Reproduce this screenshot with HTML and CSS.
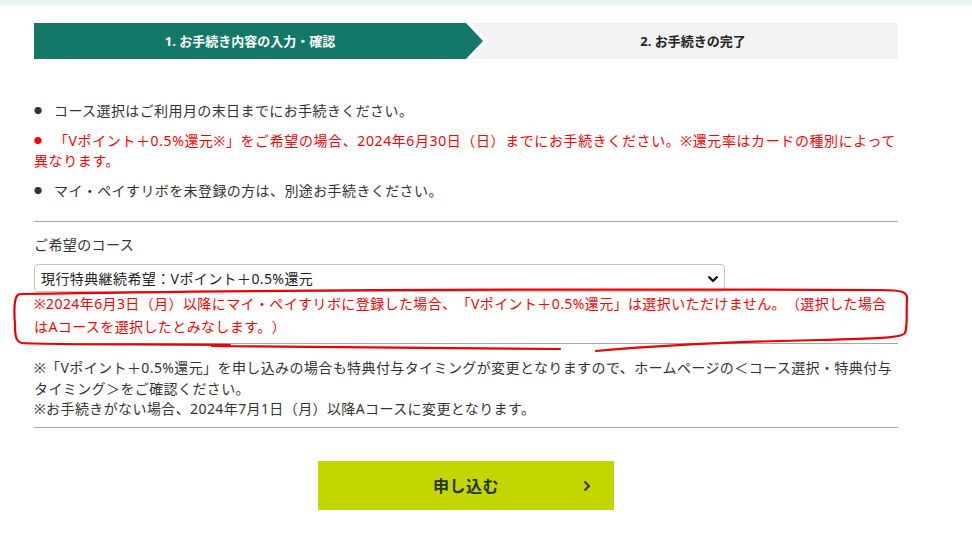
FILE: index.html
```html
<!DOCTYPE html>
<html lang="ja">
<head>
<meta charset="utf-8">
<title>お手続き</title>
<link rel="stylesheet" href="styles.css">
</head>
<body>
<div class="topstrip"></div>
<main class="page">
  <div class="steps">
    <div class="step-current"><div class="step-fill">1. お手続き内容の入力・確認</div></div>
    <div class="step-next">2. お手続きの完了</div>
  </div>

  <ul class="notes">
    <li><span class="dot">●</span>コース選択はご利用月の末日までにお手続きください。</li>
    <li class="red"><span class="dot">●</span>「Vポイント＋0.5%還元※」をご希望の場合、2024年6月30日（日）までにお手続きください。※還元率はカードの種別によって異なります。</li>
    <li><span class="dot">●</span>マイ・ペイすリボを未登録の方は、別途お手続きください。</li>
  </ul>

  <hr class="rule">

  <div class="field">
    <div class="label">ご希望のコース</div>
    <div class="select-wrap">
      <select class="select">
        <option>現行特典継続希望：Vポイント＋0.5%還元</option>
      </select>
      <svg class="chev" width="12" height="8" viewBox="0 0 12 8"><path d="M1.5 1.5 L6 6 L10.5 1.5" fill="none" stroke="#111" stroke-width="2.2"/></svg>
    </div>
    <p class="warn">※2024年6月3日（月）以降にマイ・ペイすリボに登録した場合、「Vポイント＋0.5%還元」は選択いただけません。（選択した場合はAコースを選択したとみなします。）</p>
  </div>

  <hr class="rule">

  <div class="foot">
    <p>※「Vポイント＋0.5%還元」を申し込みの場合も特典付与タイミングが変更となりますので、ホームページの＜コース選択・特典付与タイミング＞をご確認ください。</p>
    <p>※お手続きがない場合、2024年7月1日（月）以降Aコースに変更となります。</p>
  </div>

  <hr class="rule">

  <div class="actions">
    <button class="submit" type="button"><span>申し込む</span><svg class="btn-chev" width="8" height="12" viewBox="0 0 8 12"><path d="M1.5 1.5 L6 6 L1.5 10.5" fill="none" stroke="#2a3a33" stroke-width="2"/></svg></button>
  </div>
</main>

<svg class="annot" width="972" height="547" viewBox="0 0 972 547">
  <path d="M22 294 C 250 290, 600 289, 880 290 C 903 290, 908 292, 907 300 C 906 312, 908 325, 905 333 C 902 338, 880 338, 820 340 C 720 342, 640 347, 596 351 M 560 349 C 420 348, 300 347, 212 346 M 230 345 C 150 344, 60 345, 22 343 C 16 342, 15 336, 15 325 C 14 312, 14 300, 17 296 C 18 294, 20 294, 24 294" fill="none" stroke="#ee0000" stroke-width="2.2" stroke-linecap="round"/>
</svg>
</body>
</html>
```

FILE: styles.css
```css
html, body {
  margin: 0;
  padding: 0;
  background: #fff;
}
body {
  font-family: "Noto Sans", "Noto Sans CJK JP", sans-serif;
  color: #333;
  font-size: 14px;
  line-height: 20px;
  letter-spacing: 0.4px;
  text-spacing-trim: space-all;
  position: relative;
  width: 972px;
  height: 547px;
  overflow: hidden;
}
.topstrip {
  height: 5px;
  background: #e9f1f0;
}
.page {
  width: 864px;
  margin: 18px 0 0 34px;
}
.steps {
  display: flex;
  height: 36px;
  background: #f2f2f2;
}
.step-current {
  width: 454px;
  background: #fff;
  clip-path: polygon(0 0, 437px 0, 454px 50%, 437px 100%, 0 100%);
}
.step-fill {
  width: 449px;
  height: 36px;
  box-sizing: border-box;
  padding-right: 17px;
  background: #137868;
  clip-path: polygon(0 0, 432px 0, 449px 50%, 432px 100%, 0 100%);
  color: #fff;
  font-weight: bold;
  font-size: 13px;
  letter-spacing: 0;
  display: flex;
  align-items: center;
  justify-content: center;
}
.step-next {
  flex: 1;
  display: flex;
  align-items: center;
  justify-content: center;
  font-weight: bold;
  font-size: 13px;
  letter-spacing: 0;
  color: #222;
}
.notes {
  list-style: none;
  margin: 42px 0 0;
  padding: 0;
}
.notes li {
  margin-bottom: 10px;
}
.notes li:last-child {
  margin-bottom: 0;
}
.notes .dot {
  display: inline-block;
  width: 20px;
  font-size: 8px;
  vertical-align: top;
  line-height: 20px;
}
.notes .red {
  color: #f00;
  letter-spacing: 0.6px;
}
.rule {
  border: 0;
  border-top: 1px solid #a6a6a6;
  margin: 0;
  height: 0;
}
.notes + .rule {
  margin-top: 20px;
}
.field {
  padding-top: 13px;
}
.label {
  line-height: 20px;
}
.select-wrap {
  position: relative;
  width: 691px;
  margin-top: 9px;
}
.select {
  appearance: none;
  -webkit-appearance: none;
  width: 691px;
  height: 28px;
  border: 1px solid #c4c4c4;
  border-radius: 4px;
  background: #fff;
  font-family: "Noto Sans", "Noto Sans CJK JP", sans-serif;
  font-size: 14px;
  letter-spacing: 0.4px;
  text-spacing-trim: space-all;
  color: #222;
  padding: 0 6px;
  margin: 0;
  display: block;
}
.chev {
  position: absolute;
  right: 6px;
  top: 11px;
}
.warn {
  margin: 0;
  padding: 0 0 5px;
  color: #f00;
  line-height: 23px;
}
.foot {
  padding: 14px 0 7px;
}
.foot p {
  margin: 0;
  line-height: 20.5px;
}
.actions {
  display: flex;
  justify-content: center;
  padding-top: 33px;
}
.submit {
  width: 296px;
  height: 49px;
  border: 0;
  background: #c3d600;
  color: #22362f;
  font-family: "Noto Sans", "Noto Sans CJK JP", sans-serif;
  font-size: 16px;
  font-weight: bold;
  letter-spacing: 0.5px;
  position: relative;
  display: flex;
  align-items: center;
  justify-content: center;
  padding: 0;
  cursor: pointer;
}
.btn-chev {
  position: absolute;
  right: 23px;
  top: 19px;
}
.annot {
  position: absolute;
  left: 0;
  top: 0;
  pointer-events: none;
}
```
